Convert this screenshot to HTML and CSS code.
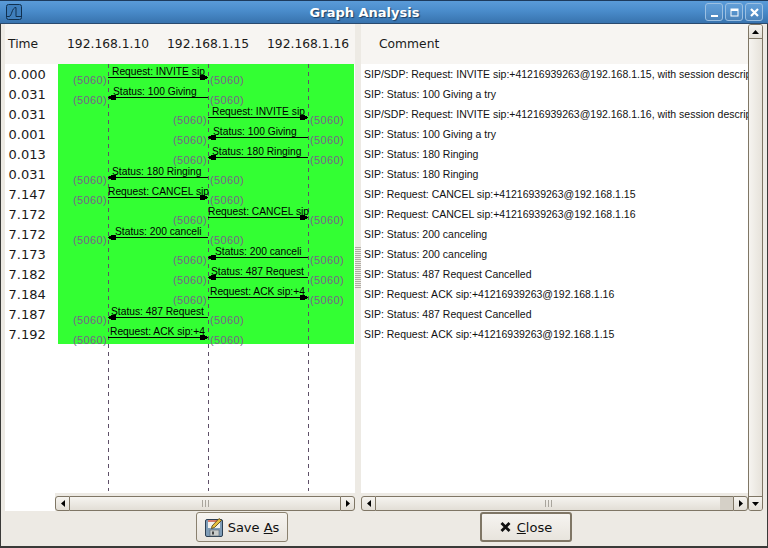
FILE: index.html
```html
<!DOCTYPE html>
<html lang="en">
<head>
<meta charset="utf-8">
<title>Graph Analysis</title>
<link rel="stylesheet" href="styles.css">
</head>
<body>
<div class="window">
  <header class="titlebar">
    <svg class="app-icon" width="16" height="16" viewBox="0 0 16 16"><rect x="0.5" y="0.5" width="15" height="15" rx="2" fill="#3f7fbd" stroke="#10304f"/><path d="M1 12.5H3C6 12.5 5.5 3.5 10 3.5V12.5H15" fill="none" stroke="#10304f" stroke-width="1"/></svg>
    <div class="title">Graph Analysis</div>
    <div class="wm-buttons">
      <div class="wm-btn"><svg width="9" height="9" viewBox="0 0 9 9"><rect x="1" y="7" width="7" height="2" fill="#fff"/></svg></div>
      <div class="wm-btn"><svg width="9" height="9" viewBox="0 0 9 9"><rect x="1" y="1" width="7" height="7" fill="none" stroke="#fff"/><rect x="1" y="1" width="7" height="2" fill="#fff"/></svg></div>
      <div class="wm-btn"><svg width="9" height="9" viewBox="0 0 9 9"><path d="M1 1L8 8M8 1L1 8" stroke="#fff" stroke-width="2.2"/></svg></div>
    </div>
  </header>

  <main class="panes">
    <div class="head head-left">
      <span class="h-time">Time</span>
      <span class="h-ip">192.168.1.10</span>
      <span class="h-ip">192.168.1.15</span>
      <span class="h-ip">192.168.1.16</span>
    </div>
    <div class="gutter"><div class="grip"></div></div>
    <div class="head head-right">Comment</div>
    <div class="vscroll">
      <div class="step step-v-top"><svg width="7" height="4" viewBox="0 0 7 4"><path d="M3.5 0L7 4H0Z"/></svg></div>
      <div class="vthumb"></div>
      <div class="step step-v-bottom"><svg width="7" height="4" viewBox="0 0 7 4"><path d="M0 0H7L3.5 4Z"/></svg></div>
    </div>

    <div class="times">
      <div>0.000</div><div>0.031</div><div>0.031</div><div>0.001</div><div>0.013</div><div>0.031</div><div>7.147</div>
      <div>7.172</div><div>7.172</div><div>7.173</div><div>7.182</div><div>7.184</div><div>7.187</div><div>7.192</div>
    </div>

    <div class="graph">
      <svg class="flow" width="300" height="429" viewBox="55 64 300 429">
        <rect x="58" y="64" width="296" height="280" fill="#33ff33"/>
        <path class="life" d="M108.5 64V491M208.5 64V491M308.5 64V491"/>

        <text class="msg" x="112" y="75">Request: INVITE sip</text><path class="wire" d="M108 77.5H208"/><path class="head-mark" d="M200 75H205V76H207V79H205V80H200Z"/><text class="port" x="73" y="84">(5060)</text><text class="port" x="210" y="84">(5060)</text>
        <text class="msg" x="113" y="95">Status: 100 Giving</text><path class="wire" d="M108 97.5H208"/><path class="head-mark" d="M109 96H111V95H116V100H111V99H109Z"/><text class="port" x="73" y="104">(5060)</text><text class="port" x="210" y="104">(5060)</text>
        <text class="msg" x="212" y="115">Request: INVITE sip</text><path class="wire" d="M208 117.5H308"/><path class="head-mark" d="M300 115H305V116H307V119H305V120H300Z"/><text class="port" x="173" y="124">(5060)</text><text class="port" x="310" y="124">(5060)</text>
        <text class="msg" x="213" y="135">Status: 100 Giving</text><path class="wire" d="M208 137.5H308"/><path class="head-mark" d="M209 136H211V135H216V140H211V139H209Z"/><text class="port" x="173" y="144">(5060)</text><text class="port" x="310" y="144">(5060)</text>
        <text class="msg" x="212" y="155">Status: 180 Ringing</text><path class="wire" d="M208 157.5H308"/><path class="head-mark" d="M209 156H211V155H216V160H211V159H209Z"/><text class="port" x="173" y="164">(5060)</text><text class="port" x="310" y="164">(5060)</text>
        <text class="msg" x="112" y="175">Status: 180 Ringing</text><path class="wire" d="M108 177.5H208"/><path class="head-mark" d="M109 176H111V175H116V180H111V179H109Z"/><text class="port" x="73" y="184">(5060)</text><text class="port" x="210" y="184">(5060)</text>
        <text class="msg" x="108" y="195">Request: CANCEL sip</text><path class="wire" d="M108 197.5H208"/><path class="head-mark" d="M200 195H205V196H207V199H205V200H200Z"/><text class="port" x="73" y="204">(5060)</text><text class="port" x="210" y="204">(5060)</text>
        <text class="msg" x="208" y="215">Request: CANCEL sip</text><path class="wire" d="M208 217.5H308"/><path class="head-mark" d="M300 215H305V216H307V219H305V220H300Z"/><text class="port" x="173" y="224">(5060)</text><text class="port" x="310" y="224">(5060)</text>
        <text class="msg" x="115" y="235">Status: 200 canceli</text><path class="wire" d="M108 237.5H208"/><path class="head-mark" d="M109 236H111V235H116V240H111V239H109Z"/><text class="port" x="73" y="244">(5060)</text><text class="port" x="210" y="244">(5060)</text>
        <text class="msg" x="215" y="255">Status: 200 canceli</text><path class="wire" d="M208 257.5H308"/><path class="head-mark" d="M209 256H211V255H216V260H211V259H209Z"/><text class="port" x="173" y="264">(5060)</text><text class="port" x="310" y="264">(5060)</text>
        <text class="msg" x="211" y="275">Status: 487 Request</text><path class="wire" d="M208 277.5H308"/><path class="head-mark" d="M209 276H211V275H216V280H211V279H209Z"/><text class="port" x="173" y="284">(5060)</text><text class="port" x="310" y="284">(5060)</text>
        <text class="msg" x="210" y="295">Request: ACK sip:+4</text><path class="wire" d="M208 297.5H308"/><path class="head-mark" d="M300 295H305V296H307V299H305V300H300Z"/><text class="port" x="173" y="304">(5060)</text><text class="port" x="310" y="304">(5060)</text>
        <text class="msg" x="111" y="315">Status: 487 Request</text><path class="wire" d="M108 317.5H208"/><path class="head-mark" d="M109 316H111V315H116V320H111V319H109Z"/><text class="port" x="73" y="324">(5060)</text><text class="port" x="210" y="324">(5060)</text>
        <text class="msg" x="110" y="335">Request: ACK sip:+4</text><path class="wire" d="M108 337.5H208"/><path class="head-mark" d="M200 335H205V336H207V339H205V340H200Z"/><text class="port" x="73" y="344">(5060)</text><text class="port" x="210" y="344">(5060)</text>
      </svg>
    </div>

    <div class="comments">
      <div>SIP/SDP: Request: INVITE sip:+41216939263@192.168.1.15, with session description</div>
      <div>SIP: Status: 100 Giving a try</div>
      <div>SIP/SDP: Request: INVITE sip:+41216939263@192.168.1.16, with session description</div>
      <div>SIP: Status: 100 Giving a try</div>
      <div>SIP: Status: 180 Ringing</div>
      <div>SIP: Status: 180 Ringing</div>
      <div>SIP: Request: CANCEL sip:+41216939263@192.168.1.15</div>
      <div>SIP: Request: CANCEL sip:+41216939263@192.168.1.16</div>
      <div>SIP: Status: 200 canceling</div>
      <div>SIP: Status: 200 canceling</div>
      <div>SIP: Status: 487 Request Cancelled</div>
      <div>SIP: Request: ACK sip:+41216939263@192.168.1.16</div>
      <div>SIP: Status: 487 Request Cancelled</div>
      <div>SIP: Request: ACK sip:+41216939263@192.168.1.15</div>
    </div>

    <div class="hbar hbar-left">
      <div class="step"><svg width="4" height="7" viewBox="0 0 4 7"><path d="M4 0V7L0 3.5Z"/></svg></div>
      <div class="hthumb"><span class="grip-h"></span></div>
      <div class="step"><svg width="4" height="7" viewBox="0 0 4 7"><path d="M0 0V7L4 3.5Z"/></svg></div>
    </div>
    <div class="hbar hbar-right">
      <div class="step"><svg width="4" height="7" viewBox="0 0 4 7"><path d="M4 0V7L0 3.5Z"/></svg></div>
      <div class="hthumb"><span class="grip-h"></span></div>
      <div class="trough"></div>
      <div class="step"><svg width="4" height="7" viewBox="0 0 4 7"><path d="M0 0V7L4 3.5Z"/></svg></div>
    </div>
  </main>

  <footer class="actions">
    <button class="btn" type="button">
      <svg width="18" height="20" viewBox="0 0 18 20">
        <rect x="0.5" y="2.5" width="17" height="17" rx="1.5" fill="#7f9db8" stroke="#2c3f52"/>
        <rect x="3" y="3" width="12" height="8" fill="#f2f2ee"/>
        <rect x="3" y="3" width="12" height="2" fill="#d77a6a"/>
        <rect x="5" y="13" width="9" height="6" fill="#c9ccc9" stroke="#55606a" stroke-width="0.6"/>
        <rect x="7" y="14.5" width="2" height="3" fill="#444"/>
        <path d="M7 9L14 1.5L16.5 3.5L9.5 10.5L6.5 11.5Z" fill="#e8c040" stroke="#4a3a10" stroke-width="0.8"/>
      </svg>
      <span>Save <u>A</u>s</span>
    </button>
    <button class="btn btn-default" type="button">
      <svg width="11" height="10" viewBox="0 0 11 10"><path d="M1.5 1L9.5 9M9.5 1L1.5 9" stroke="#111" stroke-width="2.8"/></svg>
      <span class="close-label"><u>C</u>lose</span>
    </button>
  </footer>
</div>
</body>
</html>
```

FILE: styles.css
```css
* { box-sizing: border-box; }
html, body { margin: 0; padding: 0; }
body { width: 768px; height: 548px; overflow: hidden; background: #edeae4; font-family: "DejaVu Sans", sans-serif; }

.window {
  width: 768px; height: 548px;
  display: flex; flex-direction: column;
  background: #edeae4;
  border: 1px solid #3a3a38;
  border-top: 0;
  border-bottom: 2px solid #3a3a38;
}

.titlebar {
  height: 24px; flex: none;
  margin: 0 -1px;
  display: flex; align-items: center;
  background: linear-gradient(#5a9bd8 0, #4a8ccb 45%, #3873ae 100%);
  border-top: 1px solid #1d3a5c;
  border-bottom: 1px solid #2a4a6e;
  padding-left: 6px; padding-right: 5px;
}
.app-icon { flex: none; }
.title {
  flex: 1; text-align: center;
  color: #fff; font-weight: bold; font-size: 13px;
  text-shadow: 1px 1px 1px #1e3d60;
  padding-left: 2px;
}
.wm-buttons { display: flex; gap: 2px; }
.wm-btn {
  width: 18px; height: 18px;
  display: flex; align-items: center; justify-content: center;
  border: 1px solid #9cc0e2; border-radius: 3px;
  background: rgba(255,255,255,0.08);
}

.panes {
  flex: none;
  margin-left: 4px;
  display: grid;
  grid-template-columns: 350px 6px 387px 15px;
  grid-template-rows: 40px 429px 18px;
}

.head { background: #f7f5f2; height: 40px; font-size: 12.3px; color: #1a1a1a; line-height: 40px; }
.head-left { grid-column: 1; grid-row: 1; display: flex; padding-left: 3px; white-space: nowrap; }
.h-time { width: 59px; flex: none; }
.h-ip { width: 100px; flex: none; }
.head-right { grid-column: 3; grid-row: 1; padding-left: 18px; }

.gutter { grid-column: 2; grid-row: 1 / 4; display: flex; align-items: center; justify-content: center; }
.grip {
  width: 6px; height: 42px;
  background: repeating-linear-gradient(#b0aca4 0 1px, #edeae4 1px 2px);
}

.vscroll {
  grid-column: 4; grid-row: 1 / 4;
  display: flex; flex-direction: column;
  background: #edeae4;
  border: 1px solid #7f7665; border-radius: 3px;
  overflow: hidden;
}
.vthumb { flex: 1; background: linear-gradient(90deg, #f6f4f0, #e6e2da); }
.step {
  flex: none; width: 14px; height: 14px;
  display: flex; align-items: center; justify-content: center;
  background: linear-gradient(#f6f4f0, #e2ded6);
}
.step-v-top { width: 13px; border-bottom: 1px solid #7f7665; }
.step-v-bottom { width: 13px; border-top: 1px solid #7f7665; }

.times {
  grid-column: 1; grid-row: 2 / 4;
  width: 50px; height: 447px;
  background: #fff;
  font-size: 13px; color: #1a1a1a;
  padding-top: 1px;
}
.times div { height: 20px; line-height: 20px; padding-left: 3.5px; }

.graph {
  grid-column: 1; grid-row: 2;
  margin-left: 50px; width: 300px; height: 429px;
  background: #fff;
  overflow: hidden;
}
.flow { display: block; }
.life { fill: none; stroke: #5f5068; stroke-width: 1; stroke-dasharray: 4 4; shape-rendering: crispEdges; }
.wire { fill: none; stroke: #000; stroke-width: 1; }
.head-mark { fill: #000; shape-rendering: crispEdges; }
.msg { font-family: "Liberation Sans", sans-serif; font-size: 10.25px; fill: #000; }
.port { font-family: "Liberation Sans", sans-serif; font-size: 11px; letter-spacing: 0.35px; fill: #7a5f8a; }

.comments {
  grid-column: 3; grid-row: 2;
  background: #fff; overflow: hidden;
  font-family: "Liberation Sans", sans-serif; font-size: 10.5px; color: #111;
}
.comments div { height: 20px; line-height: 20px; padding-left: 3px; white-space: nowrap; }

.hbar {
  grid-row: 3; height: 18px;
  padding-top: 3px;
  display: flex;
  background: #edeae4;
}
.hbar-left { grid-column: 1; margin-left: 50px; width: 300px; }
.hbar-right { grid-column: 3; }
.hbar .step { border: 1px solid #7f7665; height: 15px; width: 15px; }
.hbar .step:first-child { border-radius: 3px 0 0 3px; }
.hbar .step:last-child { border-radius: 0 3px 3px 0; }
.hthumb {
  flex: 1; display: flex; align-items: center; justify-content: center;
  background: linear-gradient(#f6f4f0, #e2ded6);
  border-top: 1px solid #7f7665; border-bottom: 1px solid #7f7665;
}
.grip-h {
  width: 7px; height: 7px;
  background: repeating-linear-gradient(90deg, #a9a59d 0 1px, transparent 1px 3px);
}
.trough { width: 13px; background: #d5d0c7; border-top: 1px solid #7f7665; border-bottom: 1px solid #7f7665; }

.actions {
  flex: 1;
  display: flex; align-items: flex-start;
  padding-top: 1px;
  padding-left: 195px;
  gap: 192px;
}
.btn {
  width: 92px; height: 30px;
  display: flex; align-items: center; justify-content: center; gap: 5px;
  font-family: "DejaVu Sans", sans-serif; font-size: 13px; color: #111;
  background: linear-gradient(#f6f4f0, #e8e4dd);
  border: 1px solid #8a816f; border-radius: 3px;
  padding: 0;
}
.btn-default { border: 2px solid #7f7665; gap: 6px; }
```
